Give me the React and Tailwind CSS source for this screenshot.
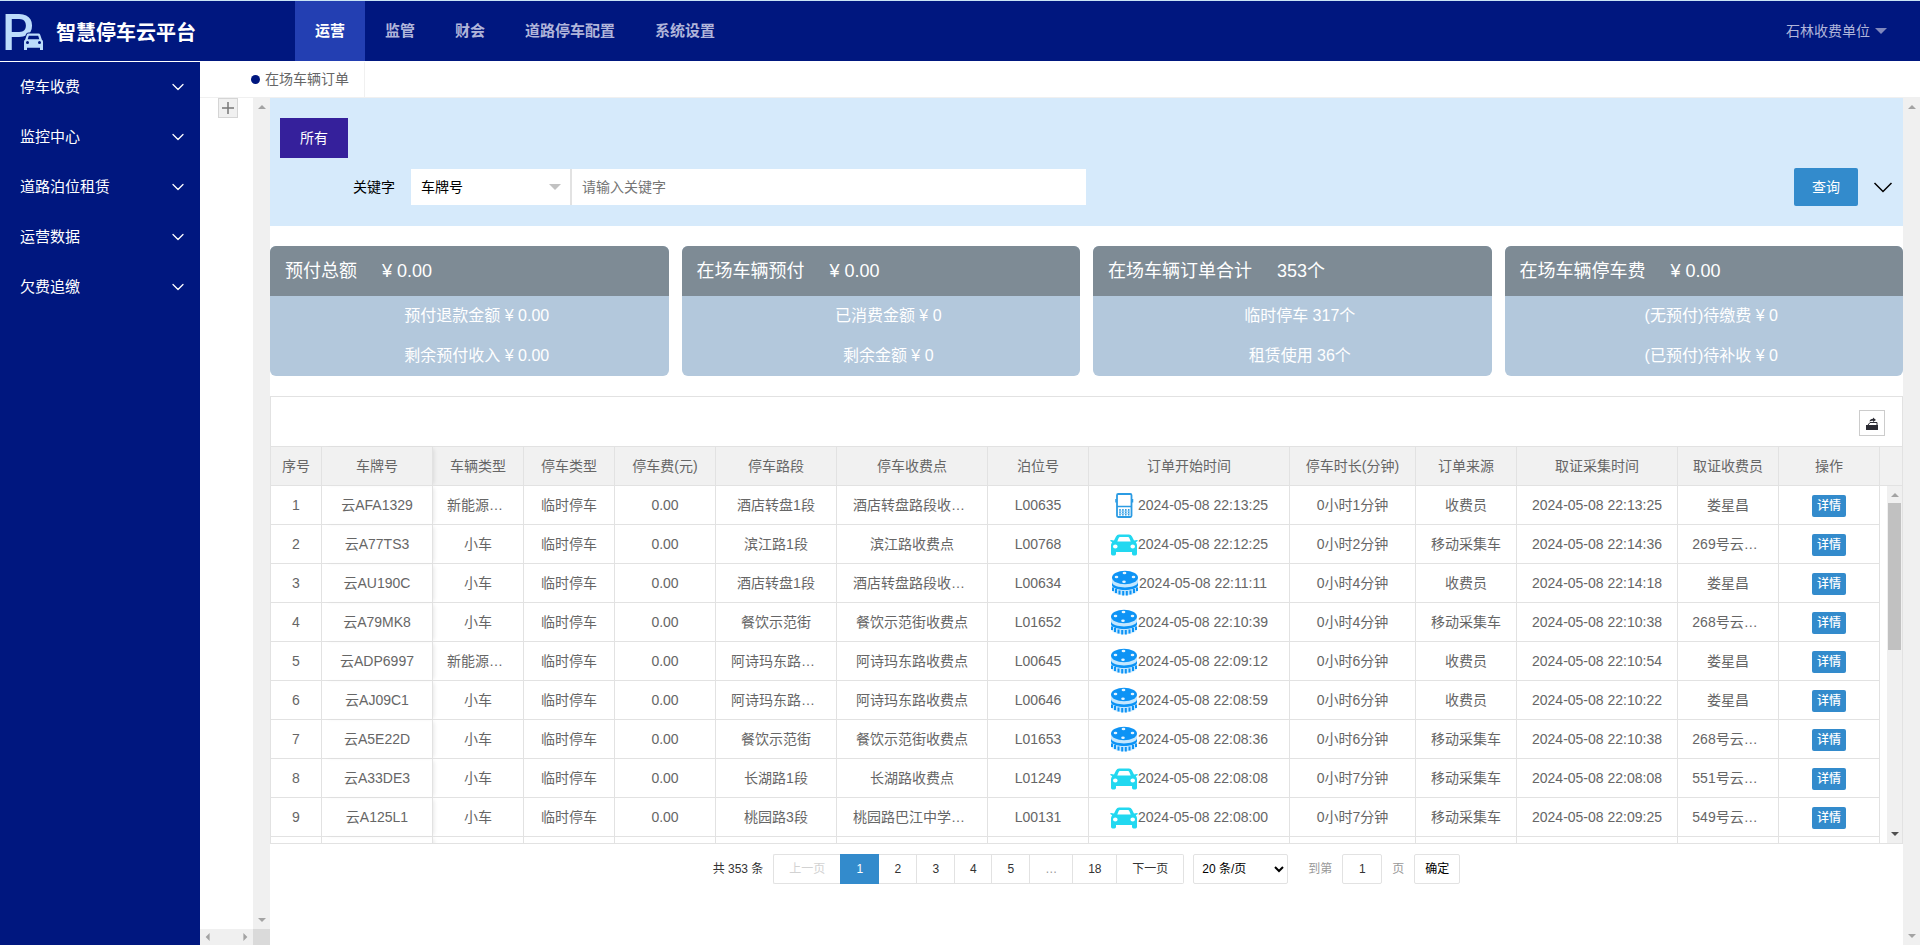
import { useState } from "react";
import { ChevronDown } from "lucide-react";

const topNav = ["运营", "监管", "财会", "道路停车配置", "系统设置"];
const sideNav = ["停车收费", "监控中心", "道路泊位租赁", "运营数据", "欠费追缴"];

const cards = [
  { title: "预付总额", value: "¥ 0.00", rows: ["预付退款金额 ¥ 0.00", "剩余预付收入 ¥ 0.00"] },
  { title: "在场车辆预付", value: "¥ 0.00", rows: ["已消费金额 ¥ 0", "剩余金额 ¥ 0"] },
  { title: "在场车辆订单合计", value: "353个", rows: ["临时停车 317个", "租赁使用 36个"] },
  { title: "在场车辆停车费", value: "¥ 0.00", rows: ["(无预付)待缴费 ¥ 0", "(已预付)待补收 ¥ 0"] },
];

const columns = [
  { label: "序号", width: 51 },
  { label: "车牌号", width: 111 },
  { label: "车辆类型", width: 91 },
  { label: "停车类型", width: 91 },
  { label: "停车费(元)", width: 101 },
  { label: "停车路段", width: 121 },
  { label: "停车收费点", width: 151 },
  { label: "泊位号", width: 101 },
  { label: "订单开始时间", width: 201 },
  { label: "停车时长(分钟)", width: 126 },
  { label: "订单来源", width: 101 },
  { label: "取证采集时间", width: 161 },
  { label: "取证收费员", width: 101 },
  { label: "操作", width: 101 },
];

const orders = [
  { plate: "云AFA1329", car: "新能源…", road: "酒店转盘1段", point: "酒店转盘路段收…", berth: "L00635", icon: "phone", start: "22:13:25", mins: 1, source: "收费员", evidence: "22:13:25", staff: "娄星昌" },
  { plate: "云A77TS3", car: "小车", road: "滨江路1段", point: "滨江路收费点", berth: "L00768", icon: "car", start: "22:12:25", mins: 2, source: "移动采集车", evidence: "22:14:36", staff: "269号云…" },
  { plate: "云AU190C", car: "小车", road: "酒店转盘1段", point: "酒店转盘路段收…", berth: "L00634", icon: "sensor", start: "22:11:11", mins: 4, source: "收费员", evidence: "22:14:18", staff: "娄星昌" },
  { plate: "云A79MK8", car: "小车", road: "餐饮示范街", point: "餐饮示范街收费点", berth: "L01652", icon: "sensor", start: "22:10:39", mins: 4, source: "移动采集车", evidence: "22:10:38", staff: "268号云…" },
  { plate: "云ADP6997", car: "新能源…", road: "阿诗玛东路…", point: "阿诗玛东路收费点", berth: "L00645", icon: "sensor", start: "22:09:12", mins: 6, source: "收费员", evidence: "22:10:54", staff: "娄星昌" },
  { plate: "云AJ09C1", car: "小车", road: "阿诗玛东路…", point: "阿诗玛东路收费点", berth: "L00646", icon: "sensor", start: "22:08:59", mins: 6, source: "收费员", evidence: "22:10:22", staff: "娄星昌" },
  { plate: "云A5E22D", car: "小车", road: "餐饮示范街", point: "餐饮示范街收费点", berth: "L01653", icon: "sensor", start: "22:08:36", mins: 6, source: "移动采集车", evidence: "22:10:38", staff: "268号云…" },
  { plate: "云A33DE3", car: "小车", road: "长湖路1段", point: "长湖路收费点", berth: "L01249", icon: "car", start: "22:08:08", mins: 7, source: "移动采集车", evidence: "22:08:08", staff: "551号云…" },
  { plate: "云A125L1", car: "小车", road: "桃园路3段", point: "桃园路巴江中学…", berth: "L00131", icon: "car", start: "22:08:00", mins: 7, source: "移动采集车", evidence: "22:09:25", staff: "549号云…" },
];

function Logo() {
  return (
    <svg className="w-11 h-[60px] shrink-0 overflow-visible" viewBox="0 0 44 60" fill="#bcdcfb" aria-hidden="true">
      <text x="0" y="49" fontFamily="Roboto, sans-serif" fontSize="50" fontWeight="500">P</text>
      <path
        transform="translate(3 12)"
        stroke="#00177f"
        strokeWidth="2"
        paintOrder="stroke"
        fillRule="evenodd"
        d="M23.500 20.500h10q1.300 0 1.700 1.200l1.700 5q1.100.700 1.100 2v8.400h-3v-2.300H22v2.300h-3v-8.400q0-1.300 1.100-2l1.700-5q.400-1.200 1.700-1.200zM23.800 22.700l-1.100 3.600h11.600l-1.100-3.600zM21 29.500a1.500 1.500 0 1 0 3 0 1.500 1.500 0 1 0-3 0zM33 29.500a1.500 1.500 0 1 0 3 0 1.500 1.500 0 1 0-3 0z"
      />
    </svg>
  );
}

function PhoneIcon() {
  return (
    <svg className="w-7 h-7 shrink-0" viewBox="0 0 28 28" fill="none" stroke="#2b9be3" aria-hidden="true">
      <rect x="7" y="3" width="14.500" height="23" rx="1.200" strokeWidth="1.800" />
      <path d="M6 8v3.500M22.500 8v3.500" strokeWidth="1.500" />
      <path d="M7 15.500h15M10 18v6.500M12.900 18v6.500M15.800 18v6.500M18.700 18v6.500" strokeWidth="1.500" />
      <path d="M9 20.200h11M9 22.600h11" strokeWidth=".9" stroke="#9fd2f5" />
    </svg>
  );
}

function CarIcon() {
  return (
    <svg className="w-7 h-7 shrink-0" viewBox="0 0 28 28" fill="#22d8f0" aria-hidden="true">
      <path
        fillRule="evenodd"
        d="M9 4.500h10q2 0 3 2l2 4 3-.5q1 .2.700 1.100l-1.900 1.100q1.200 1.300 1.200 3v8.500q0 1.800-1.500 1.800h-2q-1.500 0-1.500-1.800V22H6v1.700q0 1.800-1.500 1.800h-2Q1 25.500 1 23.700v-8.500q0-1.700 1.200-3L.3 11.100Q0 10.200 1 10l3 .5 2-4q1-2 3-2zM10 7q-.9 0-1.300.9L7.300 11.500h13.400L19.300 7.900Q18.900 7 18 7zM3 16.500a2.300 2 0 1 0 4.600 0 2.300 2 0 1 0-4.600 0zM20.400 16.500a2.300 2 0 1 0 4.600 0 2.300 2 0 1 0-4.600 0z"
      />
    </svg>
  );
}

function SensorIcon() {
  return (
    <svg className="w-7 h-7 shrink-0" viewBox="0 0 28 28" aria-hidden="true">
      <path d="M1 9v12c1 7 25 7 26 0V9z" fill="#c4e7ff" />
      <path d="M1 13.500c2 6.500 24 6.500 26 0v3c-2 6-24 6-26 0z" fill="#0d93f5" />
      <path
        d="M2 18.500v3.500M5 20v4M8.500 21.500v4M12.200 22v4.500M15.800 22v4.500M19.500 21.500v4M23 20v4M26 18.500v3.500"
        stroke="#0d93f5"
        strokeWidth="2"
      />
      <ellipse cx="14" cy="8.500" rx="13" ry="6.800" fill="#0d93f5" />
      <g fill="#e3f4ff">
        <ellipse cx="13.500" cy="4" rx="1.900" ry="1.200" />
        <ellipse cx="5.500" cy="8" rx="1.800" ry="1.300" />
        <ellipse cx="22.500" cy="8" rx="1.800" ry="1.300" />
        <ellipse cx="13" cy="12.700" rx="1.800" ry="1.300" />
      </g>
    </svg>
  );
}

const icons = { phone: PhoneIcon, car: CarIcon, sensor: SensorIcon };

function ExportIcon() {
  return (
    <svg className="w-3.5 h-3.5" viewBox="0 0 14 14" fill="#2b2b33" aria-hidden="true">
      <path d="M1 8h12v4.500q0 .5-.5.500h-11q-.5 0-.5-.5z" />
      <path d="M3 8l2-2.500h7V8" fill="none" stroke="#2b2b33" />
      <path d="M4.500 4.500Q5 1.800 8 1.800V.6L11 3 8 5V3.700Q6 3.500 4.500 4.500z" />
    </svg>
  );
}

function Arrow({ dir, dark }) {
  const points = { up: "0,5 5,0 10,5", down: "0,0 10,0 5,5", left: "7,0 7,10 2,5", right: "3,0 8,5 3,10" };
  const side = dir === "left" || dir === "right";
  return (
    <svg className={side ? "w-2 h-2" : "w-2 h-1"} viewBox={side ? "0 0 10 10" : "0 0 10 5"} fill={dark ? "#505050" : "#a3a3a3"} aria-hidden="true">
      <polygon points={points[dir]} />
    </svg>
  );
}

function VerticalBar() {
  return (
    <div className="w-[17px] shrink-0 bg-[#f0f0f0] flex flex-col items-center justify-between py-[7px]">
      <Arrow dir="up" />
      <Arrow dir="down" />
    </div>
  );
}

function ColGroup() {
  return (
    <colgroup>
      {columns.map((c) => (
        <col key={c.label} style={{ width: c.width }} />
      ))}
    </colgroup>
  );
}

function Cell({ children, fixed }) {
  const cut = typeof children === "string" && children.endsWith("…");
  return (
    <td
      className={`h-[39px] py-0 pl-0 ${cut ? "pr-1.5" : "pr-0"} border-r border-b border-[#e2e2e2] text-center whitespace-nowrap overflow-hidden ${
        fixed ? "shadow-[3px_0_4px_-2px_rgba(0,0,0,0.1)]" : ""
      }`}
    >
      {children}
    </td>
  );
}

function OrderTable() {
  return (
    <section className="mt-5 border border-[#e2e2e2]">
      <div className="h-[49px] flex items-center justify-end pr-[17px] pt-0.5">
        <button aria-label="导出" className="w-[26px] h-[26px] border border-[#ccc] flex items-center justify-center pt-0.5">
          <ExportIcon />
        </button>
      </div>
      <div className="flex border-t border-[#e2e2e2] bg-[#f1f1f1]">
        <table className="flex-1 table-fixed border-separate border-spacing-0 w-full">
          <ColGroup />
          <thead>
            <tr>
              {columns.map((c, i) => (
                <th
                  key={c.label}
                  className={`h-[39px] p-0 border-r border-b border-[#e2e2e2] font-normal text-center whitespace-nowrap ${
                    i === 1 ? "shadow-[3px_0_4px_-2px_rgba(0,0,0,0.1)]" : ""
                  }`}
                >
                  {c.label}
                </th>
              ))}
            </tr>
          </thead>
        </table>
        <div className="w-[22px] shrink-0 border-b border-[#e2e2e2]" />
      </div>
      <div className="flex h-[357px] overflow-hidden">
        <div className="flex-1 overflow-hidden">
          <table className="table-fixed border-separate border-spacing-0 w-full">
            <ColGroup />
            <tbody>
              {orders.map((o, i) => {
                const Icon = icons[o.icon];
                return (
                  <tr key={o.plate}>
                    <Cell>{i + 1}</Cell>
                    <Cell fixed>{o.plate}</Cell>
                    <Cell>{o.car}</Cell>
                    <Cell>临时停车</Cell>
                    <Cell>0.00</Cell>
                    <Cell>{o.road}</Cell>
                    <Cell>{o.point}</Cell>
                    <Cell>{o.berth}</Cell>
                    <Cell>
                      <span className="flex items-center justify-center">
                        <Icon />
                        2024-05-08 {o.start}
                      </span>
                    </Cell>
                    <Cell>0小时{o.mins}分钟</Cell>
                    <Cell>{o.source}</Cell>
                    <Cell>2024-05-08 {o.evidence}</Cell>
                    <Cell>{o.staff}</Cell>
                    <Cell>
                      <span className="flex justify-center pt-0.5">
                        <button className="h-[22px] px-[5px] rounded-xs bg-[#338bcc] text-white text-xs font-medium">
                          详情
                        </button>
                      </span>
                    </Cell>
                  </tr>
                );
              })}
              <tr>
                {columns.map((c, i) => (
                  <Cell key={c.label} fixed={i === 1} />
                ))}
              </tr>
            </tbody>
          </table>
        </div>
        <div className="w-[22px] shrink-0 flex justify-end">
          <div className="w-[15px] bg-[#f0f0f0] flex flex-col items-center pt-[7px] pb-[7px]">
            <Arrow dir="up" />
            <div className="w-[13px] h-[147px] mt-1.5 bg-[#c1c1c1]" />
            <div className="flex-1" />
            <Arrow dir="down" dark />
          </div>
        </div>
      </div>
    </section>
  );
}

function Pager() {
  const page = "h-[30px] border border-l-0 border-[#e2e2e2] text-[#333]";
  return (
    <div className="pt-2.5 flex justify-center items-center text-xs text-[#333]">
      <span className="mr-2.5">共 353 条</span>
      <button disabled className="h-[30px] w-[67px] border border-r-0 border-[#e2e2e2] rounded-l-xs text-[#d2d2d2]">上一页</button>
      <button className="h-[30px] w-[39px] bg-[#338bcc] text-white">1</button>
      <button className={`${page} w-[38px]`}>2</button>
      <button className={`${page} w-[38px]`}>3</button>
      <button className={`${page} w-[37px]`}>4</button>
      <button className={`${page} w-[38px]`}>5</button>
      <span className="h-[30px] w-[43px] border border-l-0 border-[#e2e2e2] flex items-center justify-center text-[#999]">…</span>
      <button className={`${page} w-11`}>18</button>
      <button className={`${page} w-[67px] rounded-r-xs`}>下一页</button>
      <select aria-label="每页条数" className="ml-[9px] h-[30px] w-[95px] px-1 border border-[#e2e2e2] rounded-xs bg-white text-black">
        <option>20 条/页</option>
      </select>
      <label className="ml-5 flex items-center text-[#999]">
        到第
        <input defaultValue="1" className="mx-2.5 h-[30px] w-10 border border-[#e2e2e2] rounded-xs text-center text-[#333]" />
        页
      </label>
      <button className="ml-2.5 h-[30px] w-[46px] border border-[#e2e2e2] rounded-xs text-black">确定</button>
    </div>
  );
}

export default function App() {
  const [active, setActive] = useState("运营");

  return (
    <div className="h-screen flex flex-col bg-white text-sm text-[#666] font-['Liberation_Sans','Noto_Sans_CJK_SC',sans-serif]">
      {/* Header */}
      <header className="h-[61px] shrink-0 border-t border-[#c9e4f5] bg-[#00177f] flex">
        <div className="w-[295px] flex items-center pl-0.5">
          <Logo />
          <h1 className="ml-2.5 pt-1 text-xl font-bold text-white">智慧停车云平台</h1>
        </div>
        <nav className="flex flex-1">
          {topNav.map((n) => (
            <button
              key={n}
              onClick={() => setActive(n)}
              className={`px-5 text-[15px] font-bold ${n === active ? "bg-[#233fb2] text-white" : "text-[#b0b5da]"}`}
            >
              {n}
            </button>
          ))}
        </nav>
        <button className="mr-[33px] flex items-center gap-[5px] text-[#b0b5da]">
          石林收费单位
          <svg className="w-3 h-1.5" viewBox="0 0 12 6" fill="#8088bd" aria-hidden="true">
            <polygon points="0,0 12,0 6,6" />
          </svg>
        </button>
      </header>

      <div className="flex flex-1 min-h-0 pt-px">
        {/* Sidebar */}
        <aside className="w-[200px] shrink-0 bg-[#00177f]">
          {sideNav.map((s) => (
            <button key={s} className="w-full h-[50px] px-5 pr-3 pb-px flex items-center justify-between text-[15px] text-white">
              {s}
              <ChevronDown className="w-5 h-5" strokeWidth={1.5} />
            </button>
          ))}
        </aside>

        <div className="flex-1 min-w-0 flex flex-col">
          {/* Open tabs */}
          <div className="h-9 shrink-0 flex border-b border-[#f0f0f0] pl-[51px]">
            <a href="#orders" className="flex items-center gap-[5px] pb-px pr-[15px] border-r border-[#f0f0f0]">
              <span className="w-[9px] h-[9px] rounded-full bg-[#00177f]" />
              在场车辆订单
            </a>
          </div>

          <div className="flex flex-1 min-h-0">
            {/* Tree panel */}
            <div className="w-[70px] shrink-0 flex flex-col">
              <div className="flex flex-1">
                <div className="flex-1 pl-[18px]">
                  <button aria-label="展开" className="w-5 h-5 border border-[#d5d5d5] bg-[#f0f0f0] flex items-center justify-center">
                    <svg className="w-3 h-3" viewBox="0 0 12 12" stroke="#777" strokeWidth="1.5" aria-hidden="true">
                      <path d="M6 0v12M0 6h12" />
                    </svg>
                  </button>
                </div>
                <VerticalBar />
              </div>
              <div className="h-4 flex">
                <div className="flex-1 bg-[#f0f0f0] flex items-center justify-between px-1">
                  <Arrow dir="left" />
                  <Arrow dir="right" />
                </div>
                <div className="w-[17px] bg-[#dadada]" />
              </div>
            </div>

            <main id="orders" className="flex-1 min-w-0">
              {/* Filter */}
              <form className="bg-[#d6eafb] px-2.5 pt-5 pb-5" onSubmit={(e) => e.preventDefault()}>
                <button type="button" className="block h-10 px-5 bg-[#35209b] text-white">
                  所有
                </button>
                <div className="mt-2.5 flex items-center">
                  <label htmlFor="field" className="w-[131px] pr-4 text-right text-black">
                    关键字
                  </label>
                  <div className="relative w-[160px] shrink-0">
                    <select id="field" className="w-full h-9 pl-2.5 appearance-none bg-white text-black border-r border-[#e2e2e2]">
                      <option>车牌号</option>
                    </select>
                    <svg className="absolute right-2.5 top-[15px] w-3 h-1.5 pointer-events-none" viewBox="0 0 12 6" fill="#c2c2c2" aria-hidden="true">
                      <polygon points="0,0 12,0 6,6" />
                    </svg>
                  </div>
                  <input
                    aria-label="关键字"
                    placeholder="请输入关键字"
                    className="flex-1 max-w-[515px] h-9 px-2.5 bg-white border-l border-[#e2e2e2] text-black placeholder:text-[#757575]"
                  />
                  <button className="ml-auto h-[38px] w-16 rounded-xs bg-[#338bcc] text-white">查询</button>
                  <button type="button" aria-label="更多条件" className="ml-[15px] text-black">
                    <svg className="w-5 h-5" viewBox="0 0 20 20" fill="none" stroke="currentColor" strokeWidth="1.5" aria-hidden="true">
                      <path d="M1.500 6l8.500 8.500L18.500 6" />
                    </svg>
                  </button>
                </div>
              </form>

              {/* Summary cards */}
              <div className="mt-5 grid grid-cols-4 gap-[13px] text-white">
                {cards.map((c) => (
                  <div key={c.title} className="rounded-md overflow-hidden bg-[#b3c8dc]">
                    <div className="h-[50px] px-[15px] flex items-center gap-[25px] bg-[#7e8b95] text-lg">
                      <span>{c.title}</span>
                      <span>{c.value}</span>
                    </div>
                    {c.rows.map((r) => (
                      <p key={r} className="h-10 pl-[15px] flex items-center justify-center text-base">
                        {r}
                      </p>
                    ))}
                  </div>
                ))}
              </div>

              <OrderTable />
              <Pager />
            </main>
            <VerticalBar />
          </div>
        </div>
      </div>
    </div>
  );
}
